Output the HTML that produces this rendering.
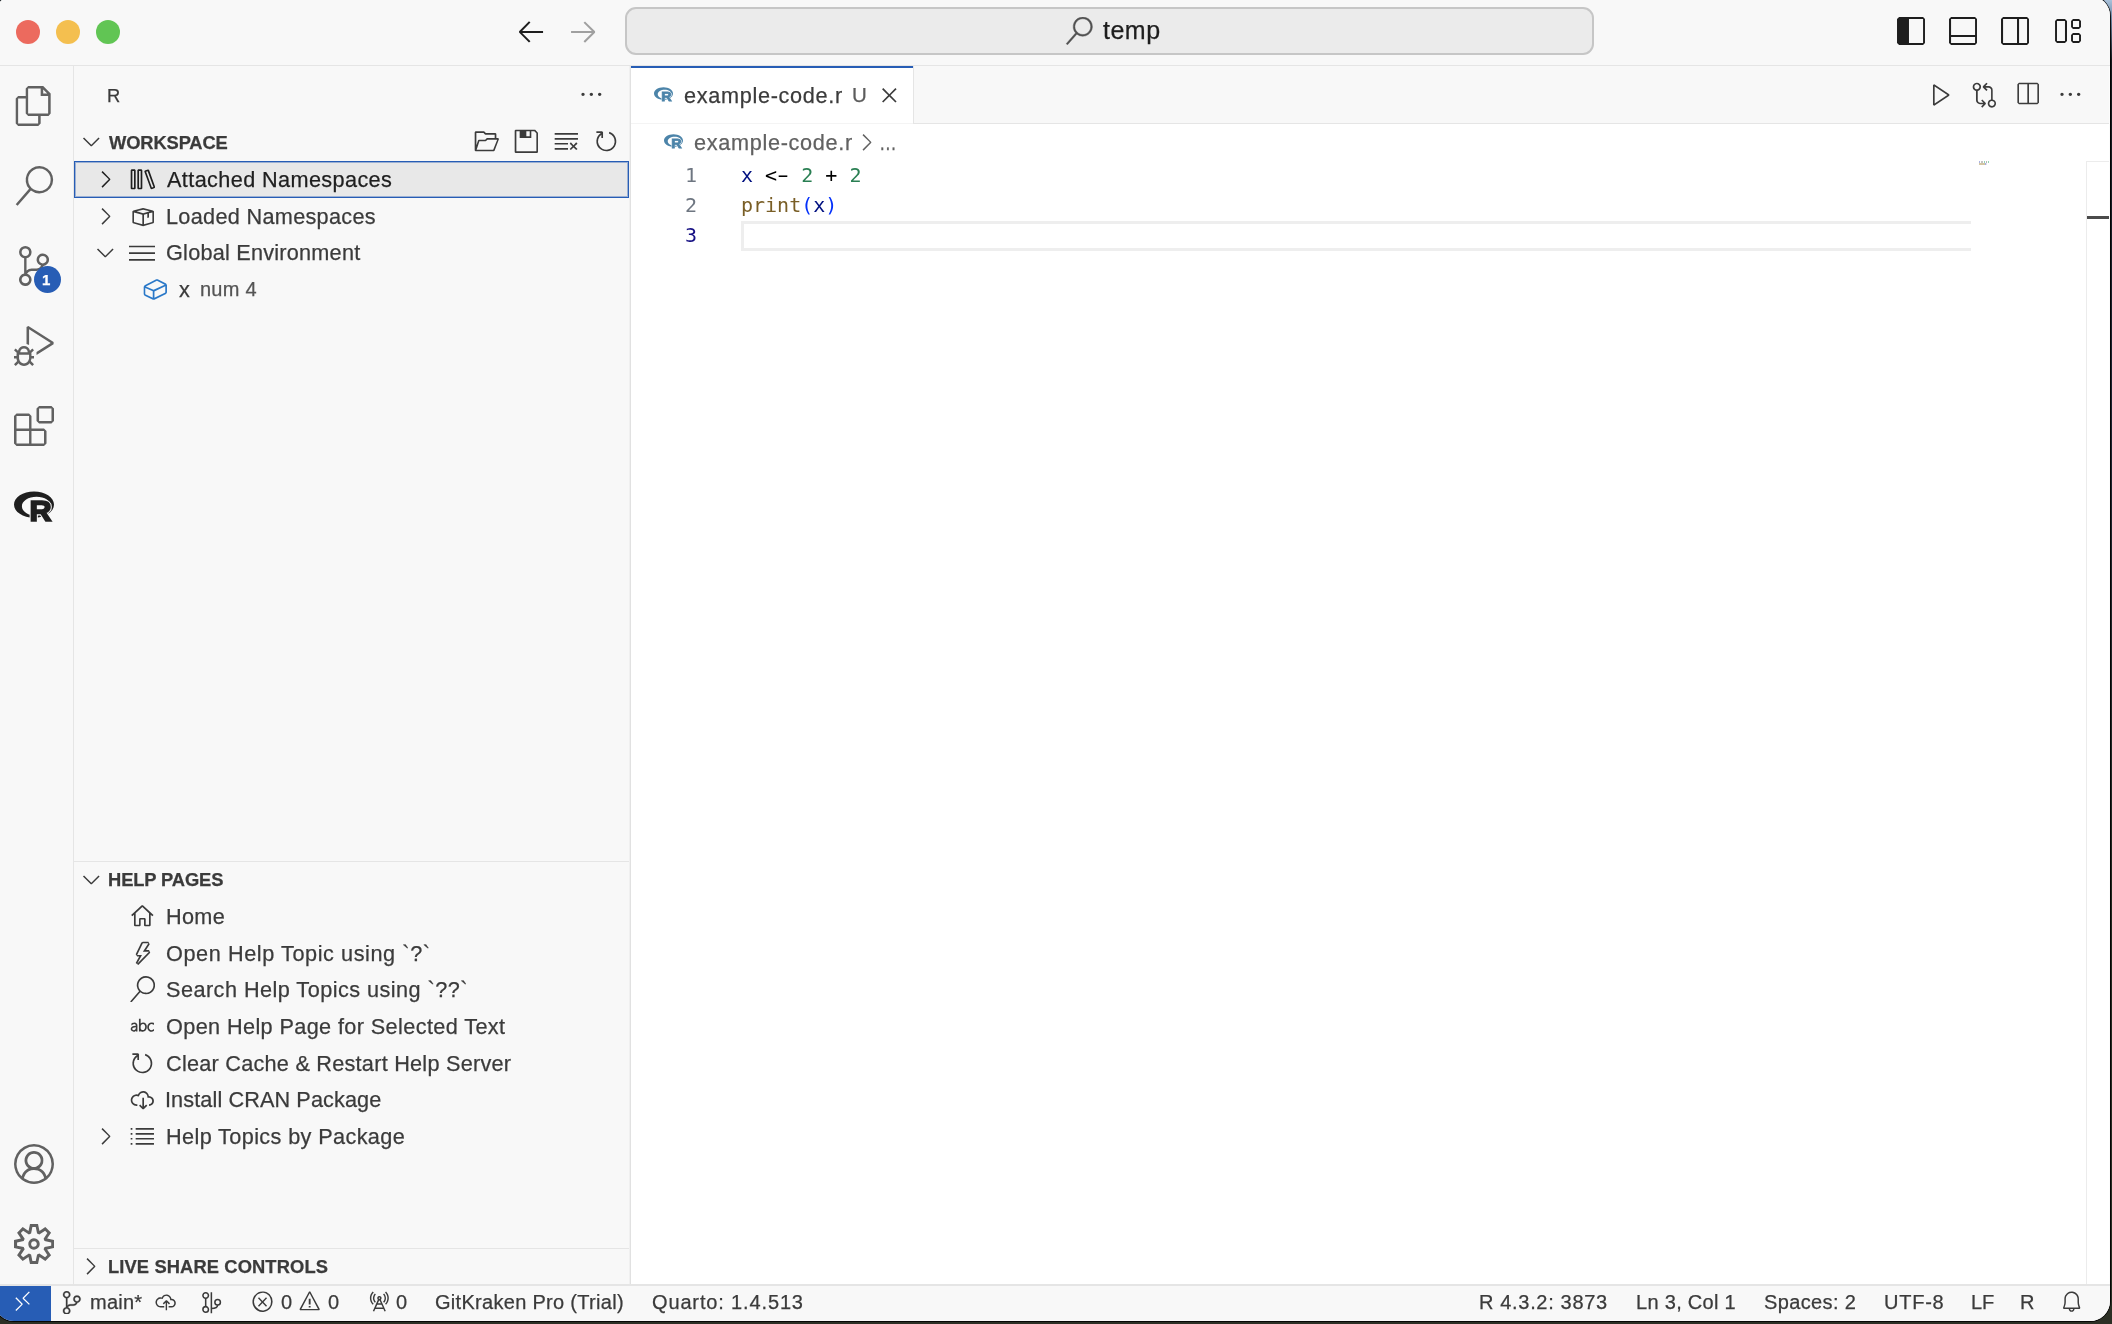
<!DOCTYPE html>
<html lang="en"><head><meta charset="utf-8"><title>example-code.r — temp</title>
<style>
html,body{margin:0;padding:0}
body{width:2112px;height:1324px;overflow:hidden;position:relative;background:linear-gradient(180deg,#a9c1da 0,#6d87a5 18px,#15181c 60px,#1b2230 400px,#22271f 900px,#2c2f25 1324px)}
#win{position:absolute;left:-6px;top:-4px;width:2116px;height:1325.2px;border-radius:20px;overflow:hidden;background:#f8f8f8;box-shadow:0 0 0 1px rgba(0,0,0,.85)}
#root{position:absolute;left:6px;top:4px;width:0;height:0;will-change:transform}
.r,.ic,.t{position:absolute;display:block}
.t{white-space:pre;}
.ui{font-family:"Liberation Sans",sans-serif;-webkit-text-stroke:0.25px currentColor}
.mono{font-family:"DejaVu Sans Mono","Liberation Mono",monospace}
</style></head><body>
<div id="win"><div id="root">
<div class="r" style="left:-6px;top:-4px;width:2116px;height:69px;background:#f8f8f8;"></div>
<div class="r" style="left:-6px;top:65px;width:2116px;height:1px;background:#e5e5e5;"></div>
<div class="r" style="left:16px;top:20px;width:24px;height:24px;border-radius:50%;background:#ec6a5e"></div>
<div class="r" style="left:56px;top:20px;width:24px;height:24px;border-radius:50%;background:#f4bf4f"></div>
<div class="r" style="left:96px;top:20px;width:24px;height:24px;border-radius:50%;background:#61c554"></div>
<svg class="ic" style="left:515.00px;top:15.00px;width:32.00px;height:32.00px" viewBox="0 0 16 16"><path fill="#1e1e1e" d="M6.99 3.09 2.03 8.11V8.8L6.99 13.81L7.73 13.07L3.57 8.96H14.03V7.95H3.57L7.73 3.79Z"/></svg>
<svg class="ic" style="left:567.00px;top:15.00px;width:32.00px;height:32.00px" viewBox="0 0 16 16"><path fill="#a0a0a0" d="M9.01 13.87 14.03 8.91V8.16L9.01 3.2L8.27 3.89L12.43 8.05H2.03V9.01H12.43L8.27 13.17Z"/></svg>
<div class="r" style="left:625px;top:7px;width:969px;height:48px;box-sizing:border-box;border:2px solid #c6c6c6;border-radius:11px;background:#ebebeb"></div>
<svg class="ic" style="left:1064.80px;top:16.80px;width:28.00px;height:28.00px" viewBox="0 0 16 16"><path fill="#505050" d="M10.19 0Q8.53 0 7.17 0.88Q5.81 1.76 5.15 3.25Q4.48 4.75 4.72 6.35Q4.96 7.95 6.03 9.12L0.69 15.25L1.44 15.89L6.77 9.81Q8.21 10.93 10 10.99Q11.79 11.04 13.28 10.03Q14.77 9.01 15.36 7.31Q15.95 5.6 15.41 3.87Q14.88 2.13 13.41 1.07Q11.95 0 10.19 0ZM10.19 9.97Q8.96 9.97 7.92 9.39Q6.88 8.8 6.27 7.76Q5.65 6.72 5.65 5.49Q5.65 4.27 6.27 3.23Q6.88 2.19 7.92 1.6Q8.96 1.01 10.19 1.01Q11.41 1.01 12.43 1.6Q13.44 2.19 14.05 3.23Q14.67 4.27 14.67 5.49Q14.67 6.72 14.05 7.76Q13.44 8.8 12.43 9.41Q11.41 10.03 10.19 10.03Z" stroke="#505050" stroke-width="0.25"/></svg>
<span id="temp" class="t ui" style="left:1103.00px;top:12.30px;height:36px;line-height:36px;font-size:25px;color:#1e1e1e;font-weight:400;letter-spacing:0.500px;">temp</span>
<svg class="ic" style="left:1895.00px;top:15.20px;width:32.00px;height:32.00px" viewBox="0 0 16 16"><path fill="#1e1e1e" d="M2.03 1.01 1.01 1.97V13.97L2.03 14.99H14.03L14.99 13.97V1.97L14.03 1.01ZM14.03 13.97H6.99V1.97H14.03Z"/></svg>
<svg class="ic" style="left:1947.00px;top:15.20px;width:32.00px;height:32.00px" viewBox="0 0 16 16"><path fill="#1e1e1e" d="M2.03 1.01 1.01 2.03V14.03L2.03 14.99H14.03L14.99 14.03V2.03L14.03 1.01ZM2.03 10.03V2.03H14.03V10.03ZM2.03 10.99H14.03V14.03H2.03Z"/></svg>
<svg class="ic" style="left:1999.00px;top:15.20px;width:32.00px;height:32.00px" viewBox="0 0 16 16"><path fill="#1e1e1e" d="M2.03 1.01 1.01 2.03V14.03L2.03 14.99H14.03L14.99 14.03V2.03L14.03 1.01ZM2.03 14.03V2.03H9.01V14.03ZM10.03 14.03V2.03H14.03V14.03Z"/></svg>
<svg class="ic" style="left:2051.00px;top:15.20px;width:32.00px;height:32.00px" viewBox="0 0 16 16"><path fill="#1e1e1e" d="M2.99 1.97 2.03 2.99V13.01L2.99 13.97H6.99L8 13.01V2.99L6.99 1.97ZM2.99 13.01V2.99H6.99V13.01ZM10.03 2.99 10.99 1.97H14.03L14.99 2.99V5.97L14.03 6.99H10.99L10.03 5.97ZM10.99 2.99V5.97H14.03V2.99ZM10.03 9.97 10.99 9.01H14.03L14.99 9.97V13.01L14.03 13.97H10.99L10.03 13.01ZM10.99 9.97V13.01H14.03V9.97Z"/></svg>
<div class="r" style="left:-6px;top:66px;width:80px;height:1220px;background:#f8f8f8;"></div>
<div class="r" style="left:73px;top:66px;width:1px;height:1220px;background:#e5e5e5;"></div>
<svg class="ic" style="left:14.00px;top:86.00px;width:40.00px;height:40.00px" viewBox="0 0 16 16"><path fill="#616161" d="M11.68 0H5.65L4.69 1.01V4H1.65L0.69 5.01V15.04L1.65 16H9.71L10.67 15.04V12H13.81L14.67 11.04V2.99ZM11.68 1.39 13.28 2.99H11.68ZM9.65 14.99H1.65V5.01H4.69V11.04L5.65 12H9.65ZM13.65 10.99H5.65V1.01H10.67V4H13.65Z"/></svg>
<svg class="ic" style="left:14.00px;top:166.00px;width:40.00px;height:40.00px" viewBox="0 0 16 16"><path fill="#616161" d="M10.19 0Q8.53 0 7.17 0.88Q5.81 1.76 5.15 3.25Q4.48 4.75 4.72 6.35Q4.96 7.95 6.03 9.12L0.69 15.25L1.44 15.89L6.77 9.81Q8.21 10.93 10 10.99Q11.79 11.04 13.28 10.03Q14.77 9.01 15.36 7.31Q15.95 5.6 15.41 3.87Q14.88 2.13 13.41 1.07Q11.95 0 10.19 0ZM10.19 9.97Q8.96 9.97 7.92 9.39Q6.88 8.8 6.27 7.76Q5.65 6.72 5.65 5.49Q5.65 4.27 6.27 3.23Q6.88 2.19 7.92 1.6Q8.96 1.01 10.19 1.01Q11.41 1.01 12.43 1.6Q13.44 2.19 14.05 3.23Q14.67 4.27 14.67 5.49Q14.67 6.72 14.05 7.76Q13.44 8.8 12.43 9.41Q11.41 10.03 10.19 10.03Z"/></svg>
<svg class="ic" style="left:14.00px;top:246.00px;width:40.00px;height:40.00px" viewBox="0 0 16 16"><path fill="#616161" d="M14.03 5.49Q14.03 4.8 13.65 4.19Q13.28 3.57 12.64 3.25Q12 2.93 11.31 2.99Q10.61 3.04 10.03 3.47Q9.44 3.89 9.2 4.56Q8.96 5.23 9.07 5.92Q9.17 6.61 9.65 7.12Q10.13 7.63 10.83 7.84Q10.56 8.37 10.08 8.67Q9.6 8.96 9.01 8.96H7.04Q5.87 8.96 5.01 9.76V4.91Q5.97 4.75 6.53 3.97Q7.09 3.2 7.01 2.24Q6.93 1.28 6.21 0.64Q5.49 0 4.53 0Q3.57 0 2.85 0.64Q2.13 1.28 2.05 2.24Q1.97 3.2 2.53 3.97Q3.09 4.75 4.05 4.91V10.99Q3.09 11.2 2.51 11.95Q1.92 12.69 2 13.65Q2.08 14.61 2.75 15.28Q3.41 15.95 4.37 16Q5.33 16.05 6.08 15.47Q6.83 14.88 6.99 13.92Q7.15 12.96 6.67 12.16Q6.19 11.36 5.23 11.09Q5.49 10.56 5.97 10.27Q6.45 9.97 7.04 9.97H9.01Q9.97 9.97 10.75 9.41Q11.52 8.85 11.84 7.95Q12.75 7.84 13.39 7.12Q14.03 6.4 14.03 5.49ZM3.04 2.51Q3.04 1.87 3.47 1.44Q3.89 1.01 4.53 1.01Q5.17 1.01 5.6 1.44Q6.03 1.87 6.03 2.48Q6.03 3.09 5.6 3.55Q5.17 4 4.53 4Q3.89 4 3.47 3.55Q3.04 3.09 3.04 2.51ZM6.03 13.44Q6.03 14.08 5.6 14.51Q5.17 14.93 4.53 14.93Q3.89 14.93 3.47 14.51Q3.04 14.08 3.04 13.47Q3.04 12.85 3.47 12.4Q3.89 11.95 4.53 11.95Q5.17 11.95 5.6 12.4Q6.03 12.85 6.03 13.44ZM11.52 6.99Q10.88 6.99 10.45 6.53Q10.03 6.08 10.03 5.47Q10.03 4.85 10.45 4.43Q10.88 4 11.49 4Q12.11 4 12.56 4.43Q13.01 4.85 13.01 5.47Q13.01 6.08 12.56 6.53Q12.11 6.99 11.52 6.99Z"/></svg>
<svg class="ic" style="left:14.00px;top:326.00px;width:40.00px;height:40.00px" viewBox="0 0 16 16"><path fill="#616161" d="M7.31 9.01 6.4 9.87Q6.19 9.07 5.52 8.53Q4.85 8 4 8Q3.15 8 2.48 8.53Q1.81 9.07 1.6 9.87L0.69 9.01L0 9.71L1.17 10.83L1.01 10.99V12H0V13.01H1.01V13.07Q1.07 13.55 1.28 14.03L0 15.31L0.69 16L1.81 14.88Q2.19 15.41 2.77 15.71Q3.36 16 4 16Q4.64 16 5.23 15.71Q5.81 15.41 6.19 14.88L7.31 16L8 15.31L6.72 13.97Q6.93 13.55 6.99 13.01V12.96H8V12H6.99V10.99L6.88 10.83L8 9.71ZM4 9.01Q4.64 9.01 5.07 9.44Q5.49 9.87 5.49 10.51H2.51Q2.51 9.87 2.93 9.44Q3.36 9.01 4 9.01ZM6.03 13.01Q5.92 13.81 5.36 14.37Q4.8 14.93 4 14.99Q3.2 14.93 2.64 14.37Q2.08 13.81 2.03 13.01V11.52H6.03ZM15.84 6.4V7.25L9.01 11.57V10.4L14.67 6.83L6.03 1.33V7.63Q5.55 7.31 5.01 7.15V0.43L5.76 0Z"/></svg>
<svg class="ic" style="left:14.00px;top:406.00px;width:40.00px;height:40.00px" viewBox="0 0 16 16"><path fill="#616161" d="M9.01 1.01 10.03 0H14.99L16 1.01V5.97L14.99 6.99H10.03L9.01 5.97ZM10.03 1.01V5.97H14.99V1.01ZM0 9.97V4L1.01 2.99H6.03L6.99 4V9.01H12L13.01 9.97V14.99L12 16H1.01L0 14.99ZM6.03 9.01V4H1.01V9.01ZM6.03 9.97H1.01V14.99H6.03ZM6.99 14.99H12V9.97H6.99Z"/></svg>
<div class="r" style="left:34px;top:266px;width:27px;height:27px;border-radius:50%;background:#275db5"></div>
<span id="badge" class="t ui" style="left:42.00px;top:269.50px;height:20px;line-height:20px;font-size:15px;color:#fff;font-weight:700;letter-spacing:0.000px;">1</span>
<svg class="ic" style="left:14.00px;top:490.70px;width:40.00px;height:31.00px;overflow:visible" viewBox="0 0 40 31"><path fill="#1f1f1f" fill-rule="evenodd" d="M20 0.4C31.05 0.4 40 6.31 40 13.6S31.05 26.8 20 26.8 0 20.89 0 13.6 8.95 0.4 20 0.4ZM22.5 5.8C14.44 5.8 7.9 10.05 7.9 15.3S14.44 24.8 22.5 24.8 37.1 20.55 37.1 15.3 30.56 5.8 22.5 5.8Z"/><text x="15.4" y="30.1" font-family="Liberation Sans, sans-serif" font-weight="700" font-size="28.6" textLength="22.1" lengthAdjust="spacingAndGlyphs" stroke-linejoin="miter" fill="#f8f8f8" stroke="#f8f8f8" stroke-width="3.5">R</text><text x="15.4" y="30.1" font-family="Liberation Sans, sans-serif" font-weight="700" font-size="28.6" textLength="22.1" lengthAdjust="spacingAndGlyphs" stroke-linejoin="miter" fill="#1f1f1f" stroke="#1f1f1f" stroke-width="1.7">R</text></svg>
<svg class="ic" style="left:14.00px;top:1144.00px;width:40.00px;height:40.00px" viewBox="0 0 16 16"><path fill="#616161" d="M16 8Q16 5.81 14.93 3.97Q13.87 2.13 12.03 1.07Q10.19 0 8 0Q5.81 0 3.97 1.07Q2.13 2.13 1.07 3.97Q0 5.81 0 8Q0 9.76 0.75 11.36Q1.49 12.96 2.83 14.08L3.52 14.61Q5.55 16 8 16Q10.45 16 12.48 14.61L13.23 14.08Q14.51 12.96 15.25 11.36Q16 9.76 16 8ZM8 14.99Q5.81 14.99 4 13.71L4.05 13.33Q4.21 12.8 4.48 12.35Q4.75 11.89 5.12 11.52Q5.49 11.15 5.92 10.88Q6.35 10.61 6.91 10.48Q7.47 10.35 8 10.35Q8.8 10.35 9.57 10.64Q10.35 10.93 10.91 11.49Q11.47 12.05 11.79 12.8Q11.95 13.23 12.05 13.71Q10.24 14.99 8 14.99ZM5.55 7.57Q5.33 7.09 5.33 6.56Q5.33 6.03 5.55 5.55Q5.76 5.07 6.11 4.72Q6.45 4.37 6.93 4.13Q7.41 3.89 8 3.89Q8.59 3.89 9.04 4.11Q9.49 4.32 9.87 4.69Q10.24 5.07 10.45 5.55Q10.67 6.03 10.67 6.59Q10.67 7.15 10.45 7.6Q10.24 8.05 9.87 8.43Q9.49 8.8 9.01 9.01Q8 9.44 6.93 9.01Q6.51 8.8 6.13 8.43Q5.76 8.05 5.55 7.57ZM12.96 12.91Q12.96 12.91 12.96 12.85V12.8Q12.75 12.05 12.29 11.41Q11.84 10.77 11.2 10.29Q10.72 9.92 10.13 9.65Q10.4 9.49 10.61 9.28Q10.99 8.91 11.25 8.48Q11.79 7.63 11.73 6.56Q11.79 5.81 11.49 5.12Q11.2 4.43 10.67 3.89Q10.13 3.36 9.44 3.09Q8.75 2.83 7.97 2.83Q7.2 2.83 6.51 3.09Q5.81 3.36 5.31 3.89Q4.8 4.43 4.51 5.12Q4.21 5.81 4.21 6.56Q4.21 7.09 4.37 7.6Q4.53 8.11 4.75 8.48Q4.96 8.85 5.39 9.28Q5.6 9.49 5.87 9.71Q5.33 9.92 4.85 10.29Q4.21 10.77 3.76 11.41Q3.31 12.05 3.04 12.85V12.91Q2.08 11.95 1.55 10.67Q1.01 9.39 1.01 8Q1.01 6.08 1.95 4.48Q2.88 2.88 4.48 1.95Q6.08 1.01 8 1.01Q9.92 1.01 11.52 1.95Q13.12 2.88 14.05 4.48Q14.99 6.08 14.99 8Q14.99 9.39 14.48 10.67Q13.97 11.95 12.96 12.91Z"/></svg>
<svg class="ic" style="left:14.00px;top:1224.00px;width:40.00px;height:40.00px" viewBox="0 0 16 16"><path fill="#616161" d="M13.23 5.81 16 6.4V9.6L13.23 10.19L14.83 12.53L12.53 14.77L10.19 13.23L9.6 16H6.4L5.81 13.23L3.47 14.83L1.23 12.53L2.77 10.19L0 9.6V6.4L2.77 5.81L1.23 3.47L3.47 1.17L5.81 2.77L6.4 0H9.6L10.19 2.77L12.53 1.17L14.83 3.47ZM12.21 9.23 14.88 8.69V7.36L12.21 6.77L11.84 5.92L13.33 3.63L12.43 2.67L10.13 4.21L9.23 3.84L8.69 1.17H7.36L6.83 3.84L5.97 4.21L3.68 2.67L2.72 3.63L4.27 5.92L3.89 6.77L1.23 7.36V8.69L3.89 9.23L4.27 10.08L2.72 12.37L3.68 13.33L5.97 11.79L6.83 12.16L7.36 14.83H8.69L9.23 12.16L10.13 11.79L12.43 13.33L13.33 12.37L11.84 10.08ZM6.72 6.08Q7.31 5.71 8 5.71Q8.96 5.71 9.63 6.37Q10.29 7.04 10.29 8Q10.29 8.8 9.76 9.44Q9.23 10.08 8.43 10.24Q7.63 10.4 6.91 10.03Q6.19 9.65 5.89 8.88Q5.6 8.11 5.81 7.33Q6.03 6.56 6.72 6.08ZM7.36 8.96Q7.68 9.12 8 9.12Q8.48 9.12 8.8 8.8Q9.12 8.48 9.12 8.03Q9.12 7.57 8.88 7.28Q8.64 6.99 8.24 6.91Q7.84 6.83 7.47 7.01Q7.09 7.2 6.93 7.57Q6.77 7.95 6.91 8.35Q7.04 8.75 7.36 8.96Z"/></svg>
<div class="r" style="left:74px;top:66px;width:555px;height:1220px;background:#f8f8f8;"></div>
<div class="r" style="left:629px;top:66px;width:1px;height:1220px;background:#f0f0f0;"></div>
<div class="r" style="left:630px;top:66px;width:1px;height:1220px;background:#e1e1e1;"></div>
<span id="sbR" class="t ui" style="left:107.00px;top:78.00px;height:36px;line-height:36px;font-size:18.33px;color:#3b3b3b;font-weight:400;letter-spacing:0.000px;">R</span>
<svg class="ic" style="left:577.66px;top:81.16px;width:26.67px;height:26.67px" viewBox="0 0 16 16"><path fill="#3b3b3b" d="M4 8Q4 8.43 3.71 8.72Q3.41 9.01 2.99 9.01Q2.56 9.01 2.29 8.72Q2.03 8.43 2.03 8Q2.03 7.57 2.29 7.28Q2.56 6.99 2.99 6.99Q3.41 6.99 3.71 7.28Q4 7.57 4 8ZM9.01 8Q9.01 8.43 8.72 8.72Q8.43 9.01 8 9.01Q7.57 9.01 7.28 8.72Q6.99 8.43 6.99 8Q6.99 7.57 7.28 7.28Q7.57 6.99 8 6.99Q8.43 6.99 8.72 7.28Q9.01 7.57 9.01 8ZM14.03 8Q14.03 8.43 13.73 8.72Q13.44 9.01 13.01 9.01Q12.59 9.01 12.29 8.72Q12 8.43 12 8Q12 7.57 12.29 7.28Q12.59 6.99 13.01 6.99Q13.44 6.99 13.73 7.28Q14.03 7.57 14.03 8Z"/></svg>
<svg class="ic" style="left:77.66px;top:128.06px;width:26.67px;height:26.67px" viewBox="0 0 16 16"><path fill="#3b3b3b" d="M8 10.08 12.32 5.71 12.96 6.35 8.27 10.99H7.68L2.99 6.35L3.63 5.71Z"/></svg>
<span id="ws" class="t ui" style="left:109.00px;top:125.00px;height:36px;line-height:36px;font-size:18.33px;color:#3b3b3b;font-weight:700;letter-spacing:-0.125px;">WORKSPACE</span>
<svg class="ic" style="left:472.67px;top:127.66px;width:26.67px;height:26.67px" viewBox="0 0 16 16"><path fill="#3b3b3b" d="M1.49 13.97H12.48L12.96 13.65L15.63 6.61L15.15 5.97H14.03V3.52L13.49 2.99H7.73L6.83 2.13L6.51 1.97H1.49L1.01 2.51V13.49ZM2.03 2.99H6.29L7.15 3.84L7.52 4H13.01V5.97H8.48L8.16 6.13L7.31 6.99H3.52L3.04 7.36L2.03 10.4ZM12.11 13.01H2.19L3.84 8H7.52L7.84 7.84L8.69 6.99H14.51Z"/></svg>
<svg class="ic" style="left:512.66px;top:127.66px;width:26.67px;height:26.67px" viewBox="0 0 16 16"><path fill="#3b3b3b" d="M13.33 1.12 14.83 2.67 14.99 2.99V14.51L14.51 14.99H1.49L1.01 14.51V1.49L1.49 1.01H13.01ZM2.03 1.97V13.97H14.03V3.2L12.8 1.97H10.99V5.97H4V1.97ZM8 1.97V5.01H10.03V1.97Z"/></svg>
<svg class="ic" style="left:552.66px;top:127.66px;width:26.67px;height:26.67px" viewBox="0 0 16 16"><path fill="#3b3b3b" d="M10.03 12.59 10.72 13.28 12.32 11.68 13.92 13.28 14.72 12.59 13.01 10.99 14.72 9.39 13.92 8.59 12.32 10.29 10.72 8.59 10.03 9.39 11.63 10.99ZM1.01 4H14.99V2.99H1.01ZM1.01 6.99H14.99V5.97H1.01ZM9.01 9.49V9.01H1.01V9.97H9.01ZM9.01 13.01V12H1.01V13.01Z"/></svg>
<svg class="ic" style="left:592.66px;top:127.66px;width:26.67px;height:26.67px" viewBox="0 0 16 16"><path fill="#3b3b3b" d="M4.69 2.99H2.03V1.97H5.49L6.03 2.51V5.97H5.01V4Q3.63 5.01 3.17 6.69Q2.72 8.37 3.41 9.97Q4.11 11.57 5.63 12.4Q7.15 13.23 8.85 12.93Q10.56 12.64 11.71 11.36Q12.85 10.08 12.99 8.35Q13.12 6.61 12.16 5.2Q11.2 3.79 9.55 3.25L9.81 2.29Q11.15 2.72 12.13 3.65Q13.12 4.59 13.6 5.87Q14.08 7.15 13.97 8.51Q13.87 9.87 13.17 11.04Q12.48 12.21 11.33 12.99Q10.19 13.76 8.83 13.95Q7.47 14.13 6.16 13.71Q4.85 13.28 3.87 12.35Q2.88 11.41 2.4 10.13Q1.92 8.85 2.03 7.49Q2.13 6.13 2.83 4.96Q3.52 3.79 4.69 2.99Z"/></svg>
<div class="r" style="left:74px;top:161px;width:555px;height:37px;background:#e8e8e8;box-shadow:inset 0 0 0 1px #275db5,inset 0 0 0 2px rgba(39,93,181,.4)"></div>
<svg class="ic" style="left:91.66px;top:165.66px;width:26.67px;height:26.67px" viewBox="0 0 16 16"><path fill="#1f1f1f" d="M10.08 8 5.71 3.68 6.35 3.04 10.99 7.73V8.32L6.35 13.01L5.71 12.37Z"/></svg>
<svg class="ic" style="left:128.66px;top:165.66px;width:26.67px;height:26.67px" viewBox="0 0 16 16"><path fill="#1f1f1f" d="M5.01 2.51 5.49 1.97H7.52L8 2.51V13.49L7.52 13.97H5.49L5.01 13.49ZM6.03 2.99V13.01H6.99V2.99ZM9.17 3.36 9.49 2.72 11.36 2.03 12 2.29 15.73 12.64 15.47 13.28 13.6 13.97 12.96 13.71ZM10.29 3.47 13.71 12.85 14.67 12.53 11.2 3.15ZM1.01 2.51 1.49 1.97H3.52L4 2.51V13.49L3.52 13.97H1.49L1.01 13.49ZM2.03 2.99V13.01H2.99V2.99Z"/></svg>
<span id="att" class="t ui" style="left:167.00px;top:162.00px;height:36px;line-height:36px;font-size:21.67px;color:#1f1f1f;font-weight:400;letter-spacing:0.389px;">Attached Namespaces</span>
<svg class="ic" style="left:91.66px;top:202.66px;width:26.67px;height:26.67px" viewBox="0 0 16 16"><path fill="#3b3b3b" d="M10.08 8 5.71 3.68 6.35 3.04 10.99 7.73V8.32L6.35 13.01L5.71 12.37Z"/></svg>
<svg class="ic" style="left:128.66px;top:202.66px;width:26.67px;height:26.67px" viewBox="0 0 16 16"><path fill="#3b3b3b" d="M8.59 2.99 14.35 4.53 14.99 5.01V11.73L14.61 12.21L8.48 13.92L2.35 12.21L2.03 11.73V5.01L2.61 4.53L8.32 2.99ZM8.53 4 4.53 5.01 5.07 5.17 8.48 6.08 11.52 5.28 12.43 5.01ZM2.99 11.36 8 12.75V6.99L2.99 5.65ZM9.01 6.99V12.75L14.03 11.36V5.65L12 6.19V8.75L10.99 9.01V6.45Z"/></svg>
<span id="loaded" class="t ui" style="left:166.00px;top:199.00px;height:36px;line-height:36px;font-size:21.67px;color:#3b3b3b;font-weight:400;letter-spacing:0.312px;">Loaded Namespaces</span>
<svg class="ic" style="left:91.66px;top:238.66px;width:26.67px;height:26.67px" viewBox="0 0 16 16"><path fill="#3b3b3b" d="M8 10.08 12.32 5.71 12.96 6.35 8.27 10.99H7.68L2.99 6.35L3.63 5.71Z"/></svg>
<svg class="ic" style="left:128.66px;top:238.66px;width:26.67px;height:26.67px" viewBox="0 0 16 16"><path fill="#3b3b3b" d="M16 5.01H0V4H16ZM16 13.01H0V12H16ZM16 9.01H0V8H16Z"/></svg>
<span id="glob" class="t ui" style="left:166.00px;top:235.00px;height:36px;line-height:36px;font-size:21.67px;color:#3b3b3b;font-weight:400;letter-spacing:0.235px;">Global Environment</span>
<svg class="ic" style="left:141.66px;top:275.67px;width:26.67px;height:26.67px" viewBox="0 0 16 16"><path fill="#2a78c8" d="M14.45 4.48 9.44 1.97H8.53L1.55 5.49L1.01 6.4V10.88L1.55 11.79L6.56 14.29H7.47L14.45 10.77L14.99 9.87V5.39ZM6.45 13.12 1.97 10.88V7.15L6.45 9.17ZM6.93 8.32 2.29 6.24 8.96 2.88 13.6 5.23ZM13.97 9.87 7.47 13.12V9.23L13.97 6.19Z"/></svg>
<span id="x" class="t ui" style="left:179.00px;top:272.00px;height:36px;line-height:36px;font-size:21.67px;color:#3b3b3b;font-weight:400;letter-spacing:0.000px;">x</span>
<span id="num4" class="t ui" style="left:200.00px;top:271.00px;height:36px;line-height:36px;font-size:20px;color:#555;font-weight:400;letter-spacing:0.250px;">num 4</span>
<div class="r" style="left:74px;top:861px;width:555px;height:1px;background:#e5e5e5;"></div>
<svg class="ic" style="left:77.66px;top:865.66px;width:26.67px;height:26.67px" viewBox="0 0 16 16"><path fill="#3b3b3b" d="M8 10.08 12.32 5.71 12.96 6.35 8.27 10.99H7.68L2.99 6.35L3.63 5.71Z"/></svg>
<span id="hp" class="t ui" style="left:108.00px;top:862.00px;height:36px;line-height:36px;font-size:18.33px;color:#3b3b3b;font-weight:700;letter-spacing:-0.111px;">HELP PAGES</span>
<svg class="ic" style="left:128.66px;top:902.66px;width:26.67px;height:26.67px" viewBox="0 0 16 16"><path fill="#3b3b3b" d="M8.37 1.39 14.72 7.15 14.03 7.89 13.01 6.99V13.49L12.48 13.97H9.49L9.01 13.49V9.97H6.99V13.49L6.51 13.97H3.52L2.99 13.49V6.99L2.03 7.89L1.28 7.15L7.63 1.39ZM4 6.08V13.01H6.03V9.49L6.51 9.01H9.49L10.03 9.49V13.01H12V6.08L8 2.45Z"/></svg>
<span id="home" class="t ui" style="left:166.00px;top:899.00px;height:36px;line-height:36px;font-size:21.67px;color:#3b3b3b;font-weight:400;letter-spacing:0.333px;">Home</span>
<svg class="ic" style="left:128.66px;top:939.66px;width:26.67px;height:26.67px" viewBox="0 0 16 16"><path fill="#3b3b3b" d="M7.41 1.55 8.32 1.01H11.63L12.43 2.56L10.24 5.97H12L12.75 7.68L5.6 14.99L4 13.81L6.13 9.97H4.91L4 8.53ZM7.79 9.01 4.91 14.29 12 6.99H8.32L11.63 1.97H8.32L4.91 9.01Z"/></svg>
<span id="oht" class="t ui" style="left:166.00px;top:936.00px;height:36px;line-height:36px;font-size:21.67px;color:#3b3b3b;font-weight:400;letter-spacing:0.583px;">Open Help Topic using `?`</span>
<svg class="ic" style="left:128.66px;top:975.66px;width:26.67px;height:26.67px" viewBox="0 0 16 16"><path fill="#3b3b3b" d="M10.19 0Q8.53 0 7.17 0.88Q5.81 1.76 5.15 3.25Q4.48 4.75 4.72 6.35Q4.96 7.95 6.03 9.12L0.69 15.25L1.44 15.89L6.77 9.81Q8.21 10.93 10 10.99Q11.79 11.04 13.28 10.03Q14.77 9.01 15.36 7.31Q15.95 5.6 15.41 3.87Q14.88 2.13 13.41 1.07Q11.95 0 10.19 0ZM10.19 9.97Q8.96 9.97 7.92 9.39Q6.88 8.8 6.27 7.76Q5.65 6.72 5.65 5.49Q5.65 4.27 6.27 3.23Q6.88 2.19 7.92 1.6Q8.96 1.01 10.19 1.01Q11.41 1.01 12.43 1.6Q13.44 2.19 14.05 3.23Q14.67 4.27 14.67 5.49Q14.67 6.72 14.05 7.76Q13.44 8.8 12.43 9.41Q11.41 10.03 10.19 10.03Z"/></svg>
<span id="sht" class="t ui" style="left:166.00px;top:972.00px;height:36px;line-height:36px;font-size:21.67px;color:#3b3b3b;font-weight:400;letter-spacing:0.464px;">Search Help Topics using `??`</span>
<svg class="ic" style="left:128.66px;top:1012.66px;width:26.67px;height:26.67px" viewBox="0 0 16 16"><path fill="#3b3b3b" d="M7.2 10.93Q7.73 11.25 8.27 11.23Q8.8 11.2 9.28 10.99Q9.76 10.77 10.08 10.35Q10.77 9.44 10.72 8.27Q10.77 7.2 10.13 6.4Q9.81 6.03 9.39 5.84Q8.96 5.65 8.48 5.65Q7.63 5.65 6.99 6.24V3.47H5.97V11.09H6.99V10.77ZM7.84 6.72Q8.11 6.56 8.43 6.61Q9.01 6.56 9.33 7.04Q9.71 7.57 9.71 8.27Q9.76 9.07 9.28 9.76Q9.12 9.97 8.88 10.13Q8.64 10.29 8.32 10.24Q7.73 10.29 7.33 9.84Q6.93 9.39 6.99 8.8V8.21Q6.93 7.57 7.36 7.04Q7.57 6.83 7.84 6.72ZM3.31 5.65Q2.83 5.71 2.37 5.84Q1.92 5.97 1.55 6.24L1.44 6.29V7.52L1.87 7.15Q2.45 6.61 3.25 6.56Q3.63 6.56 3.87 6.88Q4.11 7.2 4.11 7.63L2.88 7.84Q2.13 7.89 1.57 8.37Q1.01 8.85 1.01 9.55Q1.01 10.24 1.52 10.72Q2.03 11.2 2.77 11.2Q3.36 11.2 3.84 10.88L4.16 10.61V11.09H5.07V7.73Q5.12 6.88 4.61 6.27Q4.11 5.65 3.31 5.65ZM4.16 8.69Q4.16 9.39 3.76 9.84Q3.36 10.29 2.77 10.29Q2.45 10.29 2.21 10.08Q1.97 9.87 1.97 9.55Q1.97 9.23 2.19 9.01Q2.61 8.75 3.15 8.69L4.16 8.53ZM12.48 11.04Q12.91 11.25 13.44 11.2Q14.19 11.25 14.83 10.83L14.99 10.77V9.6L14.51 9.92Q14.03 10.29 13.41 10.29Q12.8 10.29 12.37 9.76Q11.95 9.23 11.95 8.48Q11.95 7.73 12.43 7.15Q12.91 6.56 13.6 6.61Q14.13 6.61 14.56 6.88L14.99 7.15V5.97L14.83 5.92Q14.29 5.65 13.71 5.65Q13.12 5.65 12.61 5.87Q12.11 6.08 11.73 6.45Q10.93 7.36 10.93 8.48Q10.93 9.6 11.68 10.45Q12 10.83 12.48 11.04Z"/></svg>
<span id="ohp" class="t ui" style="left:166.00px;top:1009.00px;height:36px;line-height:36px;font-size:21.67px;color:#3b3b3b;font-weight:400;letter-spacing:0.387px;">Open Help Page for Selected Text</span>
<svg class="ic" style="left:128.66px;top:1049.66px;width:26.67px;height:26.67px" viewBox="0 0 16 16"><path fill="#3b3b3b" d="M4.69 2.99H2.03V1.97H5.49L6.03 2.51V5.97H5.01V4Q3.63 5.01 3.17 6.69Q2.72 8.37 3.41 9.97Q4.11 11.57 5.63 12.4Q7.15 13.23 8.85 12.93Q10.56 12.64 11.71 11.36Q12.85 10.08 12.99 8.35Q13.12 6.61 12.16 5.2Q11.2 3.79 9.55 3.25L9.81 2.29Q11.15 2.72 12.13 3.65Q13.12 4.59 13.6 5.87Q14.08 7.15 13.97 8.51Q13.87 9.87 13.17 11.04Q12.48 12.21 11.33 12.99Q10.19 13.76 8.83 13.95Q7.47 14.13 6.16 13.71Q4.85 13.28 3.87 12.35Q2.88 11.41 2.4 10.13Q1.92 8.85 2.03 7.49Q2.13 6.13 2.83 4.96Q3.52 3.79 4.69 2.99Z"/></svg>
<span id="ccr" class="t ui" style="left:166.00px;top:1046.00px;height:36px;line-height:36px;font-size:21.67px;color:#3b3b3b;font-weight:400;letter-spacing:0.250px;">Clear Cache &amp; Restart Help Server</span>
<svg class="ic" style="left:128.66px;top:1085.66px;width:26.67px;height:26.67px" viewBox="0 0 16 16"><path fill="#3b3b3b" d="M11.95 5.97H12Q13.23 6.03 14.11 6.88Q14.99 7.73 14.99 8.99Q14.99 10.24 14.11 11.12Q13.23 12 12 12V10.99Q12.8 10.99 13.36 10.4Q13.92 9.81 13.92 9.01Q13.92 8.21 13.36 7.63Q12.8 7.04 12 6.99H11.09L10.99 6.13Q10.88 5.33 10.27 4.75Q9.65 4.16 8.83 4.03Q8 3.89 7.28 4.32Q6.56 4.75 6.24 5.49L5.92 6.24L5.07 6.08Q4.8 6.03 4.53 5.97Q3.47 5.97 2.77 6.72Q2.24 7.25 2.08 8Q1.92 8.75 2.21 9.44Q2.51 10.13 3.15 10.56Q3.79 10.99 4.53 10.99H5.01V12H4.53Q3.79 12 3.09 11.71Q2.4 11.41 1.92 10.83Q1.28 10.13 1.09 9.2Q0.91 8.27 1.2 7.36Q1.49 6.45 2.21 5.84Q2.93 5.23 3.84 5.07Q4.59 4.91 5.33 5.12Q5.81 4.05 6.83 3.47Q7.84 2.88 8.99 3.04Q10.13 3.2 10.96 4.03Q11.79 4.85 11.95 5.97ZM6.72 11.15 8 12.43V6.99H9.01V12.37L10.29 11.15L10.99 11.84L8.85 13.97H8.16L6.03 11.84Z"/></svg>
<span id="icp" class="t ui" style="left:165.00px;top:1082.00px;height:36px;line-height:36px;font-size:21.67px;color:#3b3b3b;font-weight:400;letter-spacing:0.105px;">Install CRAN Package</span>
<svg class="ic" style="left:128.66px;top:1122.66px;width:26.67px;height:26.67px" viewBox="0 0 16 16"><path fill="#3b3b3b" d="M2.03 2.99H1.01V4H2.03ZM2.03 5.97H1.01V6.99H2.03ZM1.01 9.01H2.03V9.97H1.01ZM2.03 12H1.01V13.01H2.03ZM4 2.99H14.99V4H4ZM14.99 5.97H4V6.99H14.99ZM4 9.01H14.99V9.97H4ZM14.99 12H4V13.01H14.99Z"/></svg>
<span id="htp" class="t ui" style="left:166.00px;top:1119.00px;height:36px;line-height:36px;font-size:21.67px;color:#3b3b3b;font-weight:400;letter-spacing:0.381px;">Help Topics by Package</span>
<svg class="ic" style="left:91.66px;top:1122.66px;width:26.67px;height:26.67px" viewBox="0 0 16 16"><path fill="#3b3b3b" d="M10.08 8 5.71 3.68 6.35 3.04 10.99 7.73V8.32L6.35 13.01L5.71 12.37Z"/></svg>
<div class="r" style="left:74px;top:1248px;width:555px;height:1px;background:#e5e5e5;"></div>
<svg class="ic" style="left:76.87px;top:1252.66px;width:26.67px;height:26.67px" viewBox="0 0 16 16"><path fill="#3b3b3b" d="M10.08 8 5.71 3.68 6.35 3.04 10.99 7.73V8.32L6.35 13.01L5.71 12.37Z"/></svg>
<span id="ls" class="t ui" style="left:108.00px;top:1249.00px;height:36px;line-height:36px;font-size:18.33px;color:#3b3b3b;font-weight:700;letter-spacing:0.111px;">LIVE SHARE CONTROLS</span>
<div class="r" style="left:631px;top:66px;width:1479px;height:58px;background:#f8f8f8;"></div>
<div class="r" style="left:631px;top:123px;width:1479px;height:1px;background:#e5e5e5;"></div>
<div class="r" style="left:631px;top:124px;width:1479px;height:1162px;background:#fff;"></div>
<div class="r" style="left:631px;top:66px;width:282px;height:58px;background:#fff;"></div>
<div class="r" style="left:631px;top:66px;width:282px;height:2px;background:#275db5;"></div>
<div class="r" style="left:913px;top:66px;width:1px;height:58px;background:#e5e5e5;"></div>
<div class="r" style="left:631px;top:123px;width:282px;height:1px;background:#f4f4f4;"></div>
<svg class="ic" style="left:654.00px;top:87.43px;width:19.00px;height:14.72px;overflow:visible" viewBox="0 0 40 31"><path fill="#4c84a9" fill-rule="evenodd" d="M20 0.4C31.05 0.4 40 6.31 40 13.6S31.05 26.8 20 26.8 0 20.89 0 13.6 8.95 0.4 20 0.4ZM22.5 5.8C14.44 5.8 7.9 10.05 7.9 15.3S14.44 24.8 22.5 24.8 37.1 20.55 37.1 15.3 30.56 5.8 22.5 5.8Z"/><text x="15.4" y="30.1" font-family="Liberation Sans, sans-serif" font-weight="700" font-size="28.6" textLength="22.1" lengthAdjust="spacingAndGlyphs" stroke-linejoin="miter" fill="#fff" stroke="#fff" stroke-width="2.7">R</text><text x="15.4" y="30.1" font-family="Liberation Sans, sans-serif" font-weight="700" font-size="28.6" textLength="22.1" lengthAdjust="spacingAndGlyphs" stroke-linejoin="miter" fill="#4c84a9" stroke="#4c84a9" stroke-width="1.7">R</text></svg>
<span id="tab" class="t ui" style="left:684.00px;top:78.00px;height:36px;line-height:36px;font-size:21.67px;color:#3b3b3b;font-weight:400;letter-spacing:0.692px;">example-code.r</span>
<span id="tabU" class="t ui" style="left:852.00px;top:77.00px;height:36px;line-height:36px;font-size:20.5px;color:#5c5c5c;font-weight:400;letter-spacing:0.000px;">U</span>
<svg class="ic" style="left:875.66px;top:81.66px;width:26.67px;height:26.67px" viewBox="0 0 16 16"><path fill="#3b3b3b" d="M8 8.69 11.63 12.37 12.37 11.63 8.69 8 12.37 4.37 11.63 3.63 8 7.31 4.37 3.63 3.63 4.37 7.31 8 3.63 11.63 4.37 12.37Z"/></svg>
<svg class="ic" style="left:1927.87px;top:81.26px;width:26.67px;height:26.67px" viewBox="0 0 16 16"><path fill="#3b3b3b" d="M3.79 1.97 2.99 2.4V14.4L3.79 14.83L12.8 8.85V8ZM4 13.49V3.36L11.63 8.43Z"/></svg>
<svg class="ic" style="left:1970.66px;top:80.87px;width:26.67px;height:26.67px" viewBox="0 0 16 16"><path fill="#3b3b3b" d="M7.41 13.01 6.13 11.73 6.77 11.04 8.91 13.17V13.87L6.77 16L6.08 15.25L7.36 13.97H5.49Q4.48 14.03 3.73 13.28Q2.99 12.53 2.99 11.52V5.97Q2.24 5.81 1.71 5.28Q1.17 4.75 1.04 4Q0.91 3.25 1.2 2.56Q1.49 1.87 2.11 1.44Q2.72 1.01 3.52 1.01Q4 1.01 4.48 1.17Q5.44 1.6 5.87 2.56Q6.03 3.04 6.03 3.52Q6.03 4.43 5.47 5.12Q4.91 5.81 4.05 5.97V11.47Q4.05 12.11 4.48 12.56Q4.91 13.01 5.55 13.01ZM2.72 4.75Q3.15 5.01 3.68 4.96Q4.21 4.91 4.59 4.53Q4.96 4.16 5.01 3.63Q5.07 3.09 4.8 2.69Q4.53 2.29 4.11 2.11Q3.68 1.92 3.25 2Q2.83 2.08 2.48 2.43Q2.13 2.77 2.05 3.2Q1.97 3.63 2.16 4.05Q2.35 4.48 2.72 4.75ZM13.01 11.04Q13.76 11.2 14.29 11.73Q14.93 12.37 15.01 13.25Q15.09 14.13 14.61 14.88Q14.19 15.52 13.49 15.81Q12.8 16.11 12.05 15.95Q11.31 15.79 10.77 15.25Q10.24 14.72 10.08 13.97Q9.92 13.23 10.21 12.53Q10.51 11.84 11.15 11.41Q11.57 11.15 12.05 11.04V5.49Q12.05 4.85 11.6 4.43Q11.15 4 10.56 4H8.69L9.97 5.28L9.23 5.97L7.09 3.84V3.15L9.23 1.01L9.97 1.71L8.69 2.99H10.56Q11.57 2.99 12.32 3.71Q13.07 4.43 13.01 5.49ZM12.69 14.99Q13.07 14.93 13.39 14.72Q13.71 14.51 13.89 14.13Q14.08 13.76 14.05 13.39Q14.03 13.01 13.79 12.64Q13.55 12.27 13.12 12.11Q12.69 11.95 12.24 12.03Q11.79 12.11 11.47 12.43Q11.15 12.75 11.07 13.2Q10.99 13.65 11.17 14.08Q11.36 14.51 11.79 14.77Q12.21 15.04 12.69 14.99Z"/></svg>
<svg class="ic" style="left:2014.37px;top:80.87px;width:26.67px;height:26.67px" viewBox="0 0 16 16"><path fill="#3b3b3b" d="M14.03 1.01H2.99L2.03 1.97V13.01L2.99 13.97H14.03L14.99 13.01V1.97ZM8 13.01H2.99V1.97H8ZM14.03 13.01H9.01V1.97H14.03Z"/></svg>
<svg class="ic" style="left:2057.47px;top:80.87px;width:26.67px;height:26.67px" viewBox="0 0 16 16"><path fill="#3b3b3b" d="M4 8Q4 8.43 3.71 8.72Q3.41 9.01 2.99 9.01Q2.56 9.01 2.29 8.72Q2.03 8.43 2.03 8Q2.03 7.57 2.29 7.28Q2.56 6.99 2.99 6.99Q3.41 6.99 3.71 7.28Q4 7.57 4 8ZM9.01 8Q9.01 8.43 8.72 8.72Q8.43 9.01 8 9.01Q7.57 9.01 7.28 8.72Q6.99 8.43 6.99 8Q6.99 7.57 7.28 7.28Q7.57 6.99 8 6.99Q8.43 6.99 8.72 7.28Q9.01 7.57 9.01 8ZM14.03 8Q14.03 8.43 13.73 8.72Q13.44 9.01 13.01 9.01Q12.59 9.01 12.29 8.72Q12 8.43 12 8Q12 7.57 12.29 7.28Q12.59 6.99 13.01 6.99Q13.44 6.99 13.73 7.28Q14.03 7.57 14.03 8Z"/></svg>
<svg class="ic" style="left:664.10px;top:134.43px;width:19.00px;height:14.72px;overflow:visible" viewBox="0 0 40 31"><path fill="#4c84a9" fill-rule="evenodd" d="M20 0.4C31.05 0.4 40 6.31 40 13.6S31.05 26.8 20 26.8 0 20.89 0 13.6 8.95 0.4 20 0.4ZM22.5 5.8C14.44 5.8 7.9 10.05 7.9 15.3S14.44 24.8 22.5 24.8 37.1 20.55 37.1 15.3 30.56 5.8 22.5 5.8Z"/><text x="15.4" y="30.1" font-family="Liberation Sans, sans-serif" font-weight="700" font-size="28.6" textLength="22.1" lengthAdjust="spacingAndGlyphs" stroke-linejoin="miter" fill="#fff" stroke="#fff" stroke-width="2.7">R</text><text x="15.4" y="30.1" font-family="Liberation Sans, sans-serif" font-weight="700" font-size="28.6" textLength="22.1" lengthAdjust="spacingAndGlyphs" stroke-linejoin="miter" fill="#4c84a9" stroke="#4c84a9" stroke-width="1.7">R</text></svg>
<span id="bc" class="t ui" style="left:694.00px;top:125.00px;height:36px;line-height:36px;font-size:21.67px;color:#616161;font-weight:400;letter-spacing:0.692px;">example-code.r</span>
<svg class="ic" style="left:853.46px;top:128.66px;width:26.67px;height:26.67px" viewBox="0 0 16 16"><path fill="#616161" d="M10.08 8 5.71 3.68 6.35 3.04 10.99 7.73V8.32L6.35 13.01L5.71 12.37Z"/></svg>
<span id="bcdots" class="t ui" style="left:879.00px;top:125.00px;height:36px;line-height:36px;font-size:21.67px;color:#616161;font-weight:400;letter-spacing:0.000px;transform:scaleX(.82);transform-origin:0 50%">…</span>
<span class="t mono" style="left:685px;top:160.3px;height:30px;line-height:30px;font-size:20px;color:#6e7681">1</span>
<span class="t mono" style="left:685px;top:190.3px;height:30px;line-height:30px;font-size:20px;color:#6e7681">2</span>
<span class="t mono" style="left:685px;top:220.3px;height:30px;line-height:30px;font-size:20px;color:#171184">3</span>
<span class="t mono" style="left:741px;top:160.3px;height:30px;line-height:30px;font-size:20px"><span style="color:#001080">x</span><span style="color:#000000"> &lt;</span><span style="color:#000000;display:inline-block;transform:scaleX(1.7)">-</span><span style="color:#000"> </span><span style="color:#2a7f53">2</span><span style="color:#000000"> + </span><span style="color:#2a7f53">2</span></span>
<span class="t mono" style="left:741px;top:190.3px;height:30px;line-height:30px;font-size:20px"><span style="color:#795e26">print</span><span style="color:#0431fa">(</span><span style="color:#001080">x</span><span style="color:#0431fa">)</span></span>
<div class="r" style="left:741px;top:221px;width:1230px;height:30px;box-sizing:border-box;border:3px solid #eeeeee;border-right:0"></div>
<div class="r" style="left:1979px;top:161px;width:1px;height:2px;background:#aab2e2;"></div>
<div class="r" style="left:1981px;top:161px;width:2px;height:1.5px;background:#c4c4c4;"></div>
<div class="r" style="left:1984px;top:161px;width:1px;height:2px;background:#93d3b4;"></div>
<div class="r" style="left:1986px;top:161px;width:1px;height:1.5px;background:#b5b5b5;"></div>
<div class="r" style="left:1988px;top:161px;width:1px;height:2px;background:#93d3b4;"></div>
<div class="r" style="left:1979px;top:163px;width:5.5px;height:2px;background:#d3c6a3;"></div>
<div class="r" style="left:1985px;top:163px;width:1px;height:2px;background:#a6afe6;"></div>
<div class="r" style="left:1986px;top:163px;width:1px;height:2px;background:#e4e4ea;"></div>
<div class="r" style="left:2086px;top:161px;width:1px;height:1125px;background:#ececec;"></div>
<div class="r" style="left:2086px;top:161px;width:24px;height:1px;background:#ececec;"></div>
<div class="r" style="left:2087px;top:216px;width:22px;height:3px;background:#4b4b4b;"></div>
<div class="r" style="left:2109px;top:66px;width:1px;height:1220px;background:#fcfcfc;"></div>
<div class="r" style="left:-6px;top:1284px;width:2116px;height:2px;background:#e5e5e5;"></div>
<div class="r" style="left:-6px;top:1286px;width:2116px;height:40px;background:#f8f8f8;"></div>
<div class="r" style="left:-6px;top:1286px;width:57px;height:40px;background:#275db5;"></div>
<svg class="ic" style="left:11.34px;top:1290.34px;width:23.33px;height:23.33px" viewBox="0 0 16 16"><path fill="#fff" d="M12.91 9.55 8.91 5.6 12.91 1.6 12.27 1.01 8 5.28V5.92L12.27 10.19ZM2.99 5.6 7.09 9.71 2.99 13.76 3.63 14.4 8 9.97V9.39L3.63 5.01Z"/></svg>
<svg class="ic" style="left:60.40px;top:1290.50px;width:23.60px;height:23.60px" viewBox="0 0 16 16"><path fill="#3b3b3b" d="M14.03 5.49Q14.03 4.8 13.65 4.19Q13.28 3.57 12.64 3.25Q12 2.93 11.31 2.99Q10.61 3.04 10.03 3.47Q9.44 3.89 9.2 4.56Q8.96 5.23 9.07 5.92Q9.17 6.61 9.65 7.12Q10.13 7.63 10.83 7.84Q10.56 8.37 10.08 8.67Q9.6 8.96 9.01 8.96H7.04Q5.87 8.96 5.01 9.76V4.91Q5.97 4.75 6.53 3.97Q7.09 3.2 7.01 2.24Q6.93 1.28 6.21 0.64Q5.49 0 4.53 0Q3.57 0 2.85 0.64Q2.13 1.28 2.05 2.24Q1.97 3.2 2.53 3.97Q3.09 4.75 4.05 4.91V10.99Q3.09 11.2 2.51 11.95Q1.92 12.69 2 13.65Q2.08 14.61 2.75 15.28Q3.41 15.95 4.37 16Q5.33 16.05 6.08 15.47Q6.83 14.88 6.99 13.92Q7.15 12.96 6.67 12.16Q6.19 11.36 5.23 11.09Q5.49 10.56 5.97 10.27Q6.45 9.97 7.04 9.97H9.01Q9.97 9.97 10.75 9.41Q11.52 8.85 11.84 7.95Q12.75 7.84 13.39 7.12Q14.03 6.4 14.03 5.49ZM3.04 2.51Q3.04 1.87 3.47 1.44Q3.89 1.01 4.53 1.01Q5.17 1.01 5.6 1.44Q6.03 1.87 6.03 2.48Q6.03 3.09 5.6 3.55Q5.17 4 4.53 4Q3.89 4 3.47 3.55Q3.04 3.09 3.04 2.51ZM6.03 13.44Q6.03 14.08 5.6 14.51Q5.17 14.93 4.53 14.93Q3.89 14.93 3.47 14.51Q3.04 14.08 3.04 13.47Q3.04 12.85 3.47 12.4Q3.89 11.95 4.53 11.95Q5.17 11.95 5.6 12.4Q6.03 12.85 6.03 13.44ZM11.52 6.99Q10.88 6.99 10.45 6.53Q10.03 6.08 10.03 5.47Q10.03 4.85 10.45 4.43Q10.88 4 11.49 4Q12.11 4 12.56 4.43Q13.01 4.85 13.01 5.47Q13.01 6.08 12.56 6.53Q12.11 6.99 11.52 6.99Z" stroke="#3b3b3b" stroke-width="0.2"/></svg>
<span id="main" class="t ui" style="left:90.00px;top:1284.00px;height:36px;line-height:36px;font-size:20px;color:#3b3b3b;font-weight:400;letter-spacing:0.250px;">main*</span>
<svg class="ic" style="left:154.34px;top:1290.34px;width:23.33px;height:23.33px" viewBox="0 0 16 16"><path fill="#3b3b3b" d="M11.95 5.97H12Q13.23 6.03 14.11 6.88Q14.99 7.73 14.99 8.99Q14.99 10.24 14.11 11.12Q13.23 12 12 12H10.03V10.99H12Q12.8 10.99 13.36 10.4Q13.92 9.81 13.92 9.01Q13.92 8.21 13.36 7.63Q12.8 7.04 12 6.99H11.09L10.99 6.13Q10.88 5.33 10.27 4.75Q9.65 4.16 8.83 4.03Q8 3.89 7.28 4.32Q6.56 4.75 6.24 5.49L5.92 6.24L5.07 6.08Q4.8 6.03 4.53 5.97Q3.47 6.03 2.77 6.72Q2.24 7.25 2.08 8Q1.92 8.75 2.21 9.44Q2.51 10.13 3.15 10.56Q3.79 10.99 4.53 10.99H7.04V12H4.53Q3.79 12 3.09 11.71Q2.4 11.41 1.92 10.83Q1.12 9.97 1.01 8.83Q0.91 7.68 1.49 6.72Q1.87 6.08 2.48 5.63Q3.09 5.17 3.84 5.04Q4.59 4.91 5.33 5.12Q5.81 4.05 6.83 3.47Q7.84 2.88 8.99 3.04Q10.13 3.2 10.96 4.03Q11.79 4.85 11.95 6.03ZM10.29 9.87 8.96 8.53V13.97H8V8.59L6.72 9.87L6.03 9.12L8.16 6.99H8.85L10.99 9.12Z"/></svg>
<svg class="ic" style="left:200px;top:1290px;width:23.33px;height:23.33px;overflow:visible" viewBox="0 0 16 16" fill="none" stroke="#3b3b3b" stroke-width="1.05"><circle cx="3.9" cy="3.8" r="1.9"/><circle cx="3.9" cy="13.3" r="1.9"/><circle cx="12.1" cy="8.4" r="1.9"/><path d="M3.9 5.7v5.7M7.8 1.6v14.3M12.1 10.3c0 1.6-1.6 2.4-4.3 2.4"/></svg>
<svg class="ic" style="left:251.34px;top:1290.34px;width:23.33px;height:23.33px" viewBox="0 0 16 16"><path fill="#3b3b3b" d="M8.59 1.01Q9.76 1.07 10.85 1.6Q11.95 2.13 12.8 2.99Q14.83 5.17 14.83 8.11Q14.83 10.4 13.23 12.48Q12.43 13.44 11.41 14.05Q10.4 14.67 9.23 14.88Q6.67 15.36 4.59 14.19Q3.52 13.6 2.72 12.69Q1.92 11.79 1.49 10.67Q1.07 9.55 0.99 8.32Q0.91 7.09 1.28 5.97Q2.08 3.52 4.11 2.19Q5.07 1.55 6.21 1.23Q7.36 0.91 8.59 1.01ZM9.12 13.92Q11.15 13.44 12.48 11.79Q13.81 9.97 13.71 8Q13.71 6.77 13.25 5.65Q12.8 4.53 12 3.68Q10.45 2.13 8.43 1.97Q7.41 1.92 6.4 2.16Q5.39 2.4 4.59 2.99Q2.88 4.27 2.27 6.35Q1.65 8.43 2.53 10.35Q3.41 12.27 5.23 13.28Q6.08 13.81 7.09 13.97Q8.11 14.13 9.12 13.92ZM7.89 7.52 10.29 5.01 10.99 5.71 8.59 8.21 10.99 10.72 10.29 11.41 7.89 8.91 5.49 11.41 4.8 10.72 7.2 8.21 4.8 5.71 5.49 5.01Z"/></svg>
<span id="e0" class="t ui" style="left:281.00px;top:1284.00px;height:36px;line-height:36px;font-size:20px;color:#3b3b3b;font-weight:400;letter-spacing:0.000px;">0</span>
<svg class="ic" style="left:298.33px;top:1290.34px;width:23.33px;height:23.33px" viewBox="0 0 16 16"><path fill="#3b3b3b" d="M7.57 1.01H8.43L14.99 13.28L14.56 13.97H1.44L1.01 13.28ZM8 2.29 2.29 13.01H13.71ZM8.64 12V10.99H7.36V12ZM7.36 9.97V5.97H8.64V9.97Z"/></svg>
<span id="w0" class="t ui" style="left:328.00px;top:1284.00px;height:36px;line-height:36px;font-size:20px;color:#3b3b3b;font-weight:400;letter-spacing:0.000px;">0</span>
<svg class="ic" style="left:366.94px;top:1290.34px;width:23.33px;height:23.33px" viewBox="0 0 16 16"><path fill="#3b3b3b" d="M2.99 5.6Q2.99 4.48 3.41 3.47Q3.84 2.45 4.64 1.71L3.89 1.01Q2.99 1.92 2.48 3.09Q1.97 4.27 1.97 5.57Q1.97 6.88 2.48 8.05Q2.99 9.23 3.89 10.13L4.64 9.44Q3.84 8.69 3.41 7.68Q2.99 6.67 2.99 5.6ZM4.05 5.6Q4.05 6.45 4.4 7.28Q4.75 8.11 5.39 8.75L6.08 8.05Q5.6 7.57 5.33 6.93Q5.07 6.29 5.07 5.6Q5.07 4.91 5.33 4.27Q5.6 3.63 6.08 3.15L5.39 2.4Q4.75 3.04 4.4 3.87Q4.05 4.69 4.05 5.6ZM11.73 8.8 10.99 8.05Q11.52 7.57 11.79 6.93Q12.05 6.29 12.05 5.6Q12.05 4.91 11.79 4.27Q11.52 3.63 10.99 3.15L11.73 2.45Q12.32 3.09 12.67 3.92Q13.01 4.75 13.01 5.63Q13.01 6.51 12.67 7.33Q12.32 8.16 11.73 8.8ZM13.07 1.01 12.37 1.71Q13.12 2.45 13.55 3.47Q13.97 4.48 13.97 5.57Q13.97 6.67 13.55 7.68Q13.12 8.69 12.37 9.44L13.07 10.13Q13.97 9.23 14.48 8.05Q14.99 6.88 14.99 5.57Q14.99 4.27 14.48 3.09Q13.97 1.92 13.07 1.01ZM9.97 5.44Q10.03 5.97 9.76 6.4L9.49 6.61L12.91 14.35L12 14.77L11.25 13.01H5.71L4.91 14.77L4 14.35L7.41 6.61Q7.15 6.29 7.04 5.87Q6.93 5.44 7.12 5.01Q7.31 4.59 7.65 4.35Q8 4.11 8.4 4.08Q8.8 4.05 9.15 4.21Q9.49 4.37 9.73 4.69Q9.97 5.01 9.97 5.44ZM8.37 5.07Q8.27 5.12 8.16 5.23Q8.05 5.33 8.03 5.47Q8 5.6 8.05 5.73Q8.11 5.87 8.24 5.95Q8.37 6.03 8.53 6.03Q8.69 6.03 8.85 5.89Q9.01 5.76 9.01 5.57Q9.01 5.39 8.91 5.28Q8.8 5.17 8.67 5.12Q8.53 5.07 8.37 5.07ZM8.64 7.15H8.37L7.47 9.07H9.49ZM10.83 12.05 9.92 10.08H7.04L6.19 12.05Z"/></svg>
<span id="r0" class="t ui" style="left:396.00px;top:1284.00px;height:36px;line-height:36px;font-size:20px;color:#3b3b3b;font-weight:400;letter-spacing:0.000px;">0</span>
<span id="gk" class="t ui" style="left:435.00px;top:1284.00px;height:36px;line-height:36px;font-size:20px;color:#3b3b3b;font-weight:400;letter-spacing:0.300px;">GitKraken Pro (Trial)</span>
<span id="qu" class="t ui" style="left:652.00px;top:1284.00px;height:36px;line-height:36px;font-size:20px;color:#3b3b3b;font-weight:400;letter-spacing:0.857px;">Quarto: 1.4.513</span>
<span id="rv" class="t ui" style="left:1479.00px;top:1284.00px;height:36px;line-height:36px;font-size:20px;color:#3b3b3b;font-weight:400;letter-spacing:0.667px;">R 4.3.2: 3873</span>
<span id="lc" class="t ui" style="left:1636.00px;top:1284.00px;height:36px;line-height:36px;font-size:20px;color:#3b3b3b;font-weight:400;letter-spacing:0.300px;">Ln 3, Col 1</span>
<span id="sp" class="t ui" style="left:1764.00px;top:1284.00px;height:36px;line-height:36px;font-size:20px;color:#3b3b3b;font-weight:400;letter-spacing:0.375px;">Spaces: 2</span>
<span id="utf" class="t ui" style="left:1884.00px;top:1284.00px;height:36px;line-height:36px;font-size:20px;color:#3b3b3b;font-weight:400;letter-spacing:0.750px;">UTF-8</span>
<span id="lf" class="t ui" style="left:1971.00px;top:1284.00px;height:36px;line-height:36px;font-size:20px;color:#3b3b3b;font-weight:400;letter-spacing:0.000px;">LF</span>
<span id="sR" class="t ui" style="left:2020.00px;top:1284.00px;height:36px;line-height:36px;font-size:20px;color:#3b3b3b;font-weight:400;letter-spacing:0.000px;">R</span>
<svg class="ic" style="left:2060.34px;top:1290.34px;width:23.33px;height:23.33px" viewBox="0 0 16 16"><path fill="#3b3b3b" d="M13.39 10.56Q13.01 9.44 13.01 8.21V6.19Q13.01 5.23 12.69 4.35Q12.37 3.47 11.73 2.75Q11.09 2.03 10.27 1.57Q9.44 1.12 8.48 1.01Q7.41 0.91 6.4 1.25Q5.39 1.6 4.61 2.32Q3.84 3.04 3.41 4Q2.99 4.96 2.99 6.03V8.21Q2.99 9.44 2.61 10.56L2.03 12.32L2.45 13.01H5.97Q5.97 13.81 6.56 14.4Q7.15 14.99 7.97 14.99Q8.8 14.99 9.39 14.4Q9.97 13.81 9.97 13.01H13.49L13.97 12.32ZM8.69 13.71Q8.37 14.03 7.97 14.03Q7.57 14.03 7.28 13.73Q6.99 13.44 6.99 13.01H8.96Q9.01 13.44 8.69 13.71ZM3.15 12 3.52 10.88Q4 9.6 4 8.21V6.03Q4 5.17 4.35 4.37Q4.69 3.57 5.31 3.01Q5.92 2.45 6.75 2.19Q7.57 1.92 8.37 2.03Q9.97 2.24 10.99 3.41Q11.47 4 11.73 4.72Q12 5.44 12 6.19V8.21Q12 9.6 12.43 10.93L12.8 12Z"/></svg>
</div></div>
</body></html>
